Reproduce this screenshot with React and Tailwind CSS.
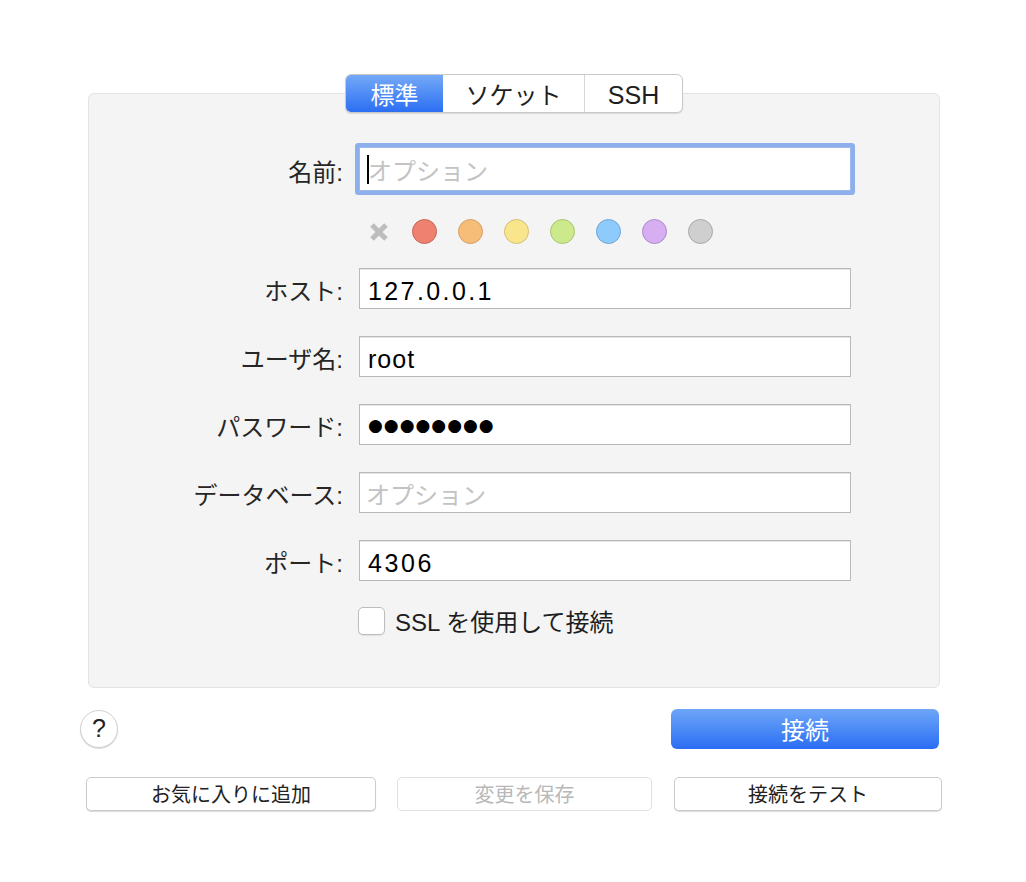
import React from 'react';

const labelCls = "w-[254px] shrink-0 pt-[7px] text-right text-[24px] text-[#262626] leading-none";
const inputCls = "ml-[16px] w-[492px] h-[41px] bg-white border border-[#b9b9b9] shadow-[inset_0_1px_0_#e4e4e4] flex items-center pt-[6px] pl-[8px]";

const colors = [
  ['bg-[#ee8170]', 'border-[#c86656]'],
  ['bg-[#f6bd78]', 'border-[#d69f63]'],
  ['bg-[#f9e68c]', 'border-[#d2bf72]'],
  ['bg-[#cce98b]', 'border-[#a8c56e]'],
  ['bg-[#8ecbfc]', 'border-[#6ca6d8]'],
  ['bg-[#d8aef2]', 'border-[#ae89cc]'],
  ['bg-[#cfcfcf]', 'border-[#a8a8a8]'],
];

const Row = ({ label, children }) => (
  <div className="flex items-center">
    <div className={labelCls}>{label}</div>
    <div className={inputCls}>{children}</div>
  </div>
);

const App = () => {
  return (
    <div className="w-[1026px] h-[882px] bg-white pt-[74px] font-['Liberation_Sans','Noto_Sans_CJK_JP',sans-serif]">
      <div className="ml-[88px] w-[852px]">
        {/* segmented tabs */}
        <div className="relative z-10 flex justify-center -mb-[20px]">
          <div className="flex h-[39px] rounded-[6px] border border-[#c9c9c9] bg-white shadow-[0_1px_1px_rgba(0,0,0,0.12)] overflow-hidden">
            <div className="w-[97px] pt-[5px] flex items-center justify-center text-[24px] text-white bg-gradient-to-b from-[#74a8f7] to-[#2b6ef2]">標準</div>
            <div className="w-[142px] pt-[5px] flex items-center justify-center text-[24px] text-[#1e1e1e] border-r border-[#d7d7d7]">ソケット</div>
            <div className="w-[97px] pt-[5px] flex items-center justify-center text-[25px] text-[#1e1e1e]">SSH</div>
          </div>
        </div>

        {/* panel */}
        <div className="h-[595px] rounded-[6px] border border-[#e3e3e3] bg-[#f4f4f4] pt-[53px]">
          <div className="flex items-center">
            <div className={labelCls}>名前:</div>
            <div className="ml-[16px] w-[492px] h-[44px] bg-white border border-[#9eb9e8] rounded-[1px] ring-[4px] ring-[#8db0ec] flex items-center pl-[7px]">
              <span className="w-[2px] h-[29px] bg-black"></span>
              <span className="pt-[6px] -ml-[1px] text-[24px] text-[#c3c3c3] leading-none">オプション</span>
            </div>
          </div>

          <div className="flex items-center ml-[279px] mt-[28px] gap-[21px]">
            <svg width="22" height="22" viewBox="0 0 22 22" className="mr-[1px]">
              <path d="M4 4 L18 18 M18 4 L4 18" stroke="#bdbdbd" strokeWidth="5" strokeLinecap="butt" />
            </svg>
            {colors.map(([bg, bd], i) => (
              <span key={i} className={`w-[25px] h-[25px] rounded-full border ${bg} ${bd}`}></span>
            ))}
          </div>

          <div className="mt-[24px] flex flex-col gap-[27px]">
            <Row label="ホスト:"><span className="text-[25px] tracking-[2.4px] leading-none text-black">127.0.0.1</span></Row>
            <Row label="ユーザ名:"><span className="text-[25px] tracking-[1px] leading-none text-black">root</span></Row>
            <Row label="パスワード:"><span className="-mt-[5px] text-[17px] leading-none text-black tracking-[1px] font-['DejaVu_Sans',sans-serif]">●●●●●●●●</span></Row>
            <Row label="データベース:"><span className="-ml-[2px] text-[24px] leading-none text-[#c3c3c3]">オプション</span></Row>
            <Row label="ポート:"><span className="text-[25px] tracking-[2.6px] leading-none text-black">4306</span></Row>
          </div>

          <div className="flex items-center ml-[269px] mt-[26px]">
            <span className="w-[27px] h-[28px] rounded-[5px] border border-[#bdbdbd] bg-white shadow-[0_1px_1px_rgba(0,0,0,0.08)]"></span>
            <span className="ml-[10px] pt-[4px] text-[24px] text-[#1e1e1e] leading-none">SSL を使用して接続</span>
          </div>
        </div>
      </div>

      {/* action row */}
      <div className="ml-[80px] w-[859px] mt-[21px] flex items-center justify-between">
        <div className="w-[38px] h-[38px] rounded-full bg-white border border-[#d2d2d2] shadow-[0_1px_1px_rgba(0,0,0,0.15)] flex items-center justify-center text-[25px] text-[#222]">?</div>
        <div className="w-[268px] h-[40px] pt-[3px] rounded-[6px] bg-gradient-to-b from-[#6fa6f8] to-[#2a6cf3] flex items-center justify-center text-[24px] text-white">接続</div>
      </div>

      <div className="ml-[86px] mt-[28px] flex items-center">
        <div className="w-[290px] h-[34px] pt-[2px] rounded-[5px] bg-white border border-[#cbcbcb] shadow-[0_1px_1px_rgba(0,0,0,0.15)] flex items-center justify-center text-[20px] text-[#222]">お気に入りに追加</div>
        <div className="ml-[21px] w-[255px] h-[34px] pt-[2px] rounded-[5px] bg-white border border-[#e0e0e0] flex items-center justify-center text-[20px] text-[#b8b8b8]">変更を保存</div>
        <div className="ml-[22px] w-[268px] h-[34px] pt-[2px] rounded-[5px] bg-white border border-[#cbcbcb] shadow-[0_1px_1px_rgba(0,0,0,0.15)] flex items-center justify-center text-[20px] text-[#222]">接続をテスト</div>
      </div>
    </div>
  );
};

export default App;
